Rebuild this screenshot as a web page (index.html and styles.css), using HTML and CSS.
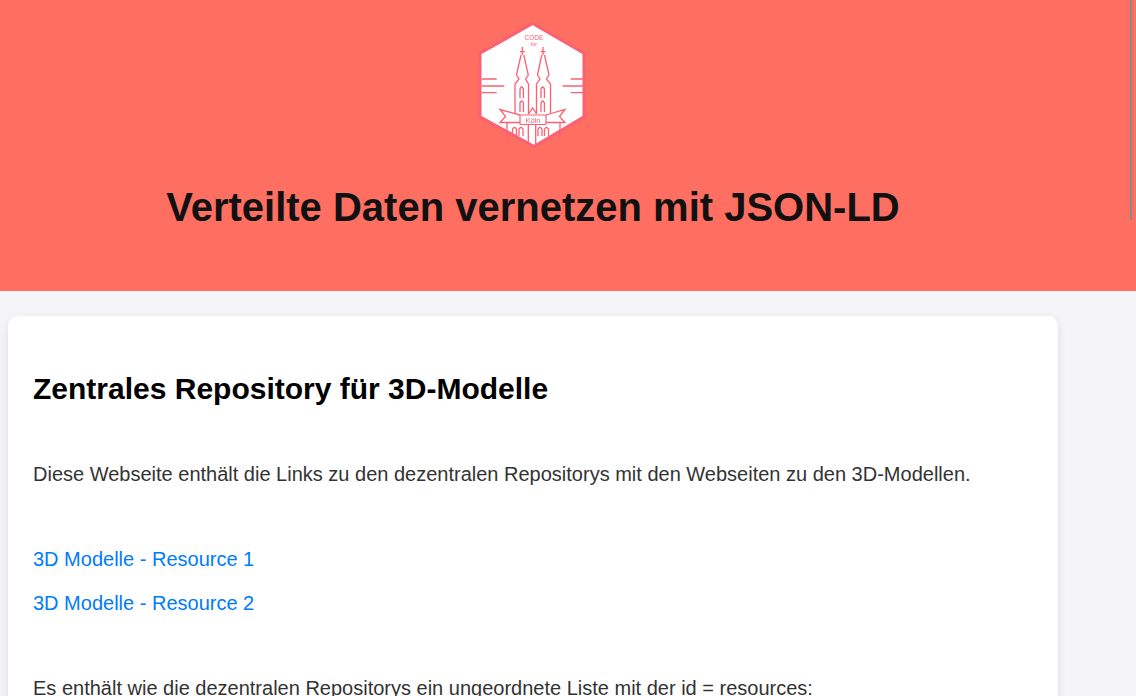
FILE: index.html
```html
<!DOCTYPE html>
<html lang="de">
<head>
    <meta charset="UTF-8">
    <meta name="viewport" content="width=device-width, initial-scale=1.0">
    <title>Verteilte Daten vernetzen mit JSON-LD</title>
    <link rel="stylesheet" href="styles.css">
</head>
<body>

    <header class="site-header">
        <div class="header-inner">
            <svg class="logo" width="110" height="126" viewBox="0 0 110 126" aria-label="Code for Köln">
                <polygon points="54.7,1.5 106,31.3 106,94.7 56,124.5 2,94.7 2,31.3" fill="#fff" stroke="#fb6073" stroke-width="3"/>
                <g fill="none" stroke="#fb6073" stroke-width="1.3">
                    <path d="M4 57H18.7M4 64H26.3M4 70.7H18.7M105 57H92.7M105 64H84.7M105 70.7H92.7"/>
                    <!-- towers -->
                    <path d="M44.3 25V33M41.8 29.7H46.8M65 25V33M62.5 29.7H67.5"/>
                    <path d="M43 33L38.5 53L41 57L37 62V92M45.8 33L50.3 53L47.5 57L50.5 62V92"/>
                    <path d="M63.7 33L59.5 53L62 57L58.5 62V92M66.5 33L71 53L68.5 57L72.5 62V92"/>
                    <path d="M42 76V67Q43.7 63 45.4 67V76M42 90V81Q43.7 77 45.4 81V90M63 76V67Q64.7 63 66.4 67V76M63 90V81Q64.7 77 66.4 81V90"/>
                    <path d="M50.5 92L54.7 86L58.5 92"/>
                    <!-- ribbon -->
                    <path d="M42 93L22 87.5L27.5 94.5L22 100.5H42M68 93L87 87.5L81.5 94.5L87 100.5H68"/>
                    <!-- lower part -->
                    <path d="M29 100V116M82 100V116M50.3 102V122M57.7 102V122"/>
                    <path d="M34.5 114V107Q36.5 104 38.5 107V114M41 114V107Q43 104 45 107V114M60 114V107Q62 104 64 107V114M66.5 114V107Q68.5 104 70.5 107V114"/>
                </g>
                <rect class="logo-plate" x="42" y="93" width="26" height="9.5" rx="0.5"/>
                <text class="logo-code" x="56" y="18">CODE</text>
                <text class="logo-for" x="56" y="24">for</text>
                <text class="logo-city" x="55" y="100.8">Köln</text>
            </svg>
            <h1>Verteilte Daten vernetzen mit JSON-LD</h1>
        </div>
    </header>

    <!-- thin overlay scrollbar of the browser -->
    <div class="scroll-thumb"></div>

    <main class="card">
        <h2>Zentrales Repository für 3D-Modelle</h2>
        <p>Diese Webseite enthält die Links zu den dezentralen Repositorys mit den Webseiten zu den 3D-Modellen.</p>
        <ul class="resources">
            <li><a href="#">3D Modelle - Resource 1</a></li>
            <li><a href="#">3D Modelle - Resource 2</a></li>
        </ul>
        <p>Es enthält wie die dezentralen Repositorys ein ungeordnete Liste mit der id = resources:</p>
    </main>

</body>
</html>
```

FILE: styles.css
```css
/* General Styles */
* {
    margin: 0;
    padding: 0;
    box-sizing: border-box;
    font-family: "Liberation Sans", Arial, sans-serif;
}

html, body {
    height: 696px;
    overflow: hidden;
}

body {
    background-color: #f4f4f9;
    color: #333;
}

/* Header */
.site-header {
    height: 291px;
    padding-top: 22px;
    background-color: #ff6f61;
}

.header-inner {
    width: 1050px;
    margin-left: 8px;
    display: flex;
    flex-direction: column;
    align-items: center;
}

.logo {
    filter: blur(0.35px);
}

.logo-plate {
    fill: #fff;
    stroke: #fb6073;
    stroke-width: 1.2;
}

.logo-code, .logo-for, .logo-city {
    fill: #fb6073;
    text-anchor: middle;
}

.logo-code {
    font-size: 6.5px;
}

.logo-for {
    font-size: 5.5px;
}

.logo-city {
    font-size: 7.5px;
}

h1 {
    margin-top: 36px;
    font-size: 40px;
    line-height: 46px;
    color: #111;
}

.scroll-thumb {
    position: absolute;
    top: 0;
    right: 4px;
    width: 2px;
    height: 220px;
    background-color: #8a8a8a;
}

/* Card */
.card {
    width: 1050px;
    height: 600px;
    margin: 25px 0 0 8px;
    padding: 55px 25px 20px;
    background: white;
    border-radius: 10px;
    box-shadow: 0px 4px 10px rgba(0, 0, 0, 0.1);
}

h2 {
    font-size: 30px;
    line-height: 36px;
    color: #000;
    margin-bottom: 51px;
}

p {
    font-size: 20px;
    line-height: 32px;
}

.resources {
    list-style: none;
    margin: 53px 0 53px;
}

.resources li {
    font-size: 20px;
    line-height: 32px;
    margin-bottom: 12px;
}

.resources a {
    color: #007bff;
    text-decoration: none;
}
```
